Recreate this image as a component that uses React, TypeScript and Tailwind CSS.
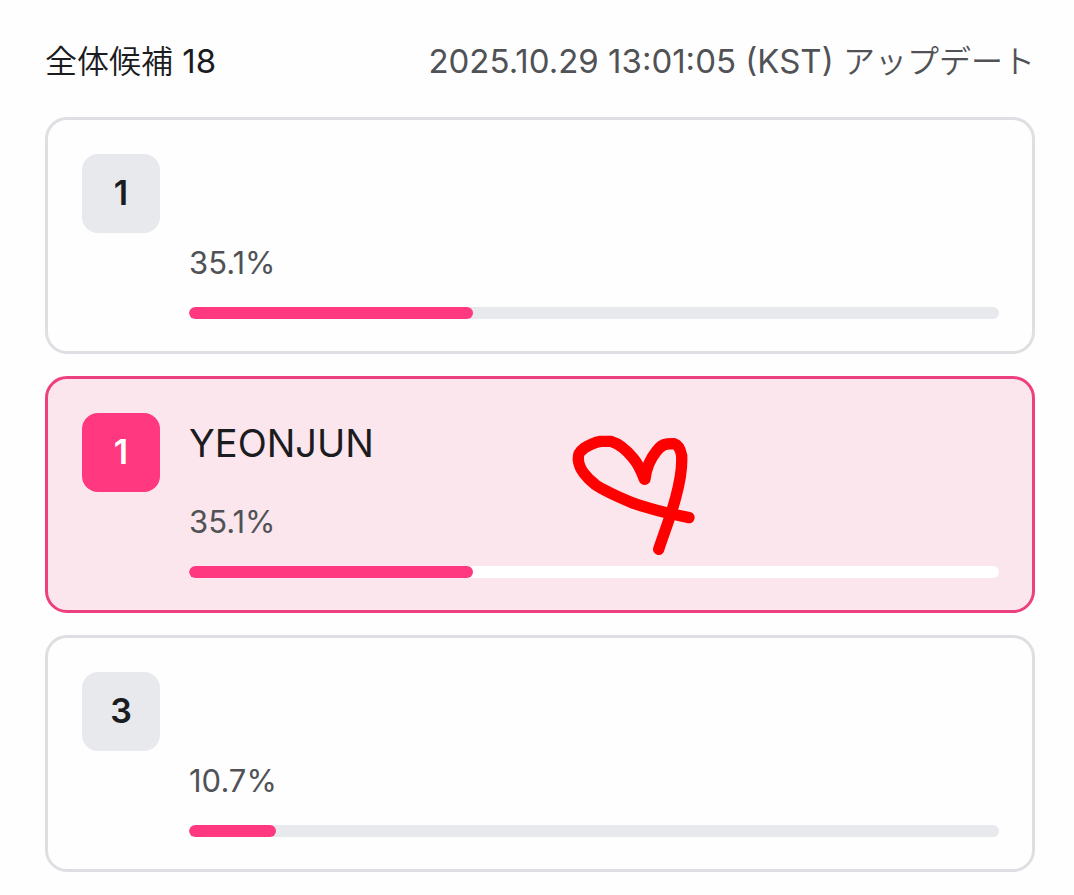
type Candidate = {
    rank: number
    name: string
    percent: number
    selected?: boolean
}

const candidates: Candidate[] = [
    { rank: 1, name: "", percent: 35.1 },
    { rank: 1, name: "YEONJUN", percent: 35.1, selected: true },
    { rank: 3, name: "", percent: 10.7 },
]

function Heart() {
    return (
        <svg
            className="absolute left-[524px] top-[56px] w-[123px] h-[121px]"
            viewBox="65 75 369 363"
            fill="none"
            stroke="#ff0000"
            strokeWidth="34"
            strokeLinecap="round"
            strokeLinejoin="round"
            aria-hidden="true"
        >
            <path d="M282 207C275 188 264 163 249 145C231 123 207 101 182 94L150 94C132 97 115 106 101 115C86 126 83 133 84 150C86 178 112 207 135 224C164 244 202 260 240 276C282 293 340 307 416 323" />
            <path d="M284 207C287 180 299 147 318 124C330 109 337 103 350 102L371 101C385 105 391 121 394 137C396 173 388 219 376 263C364 310 346 356 325 418" />
        </svg>
    )
}

function CandidateCard({ rank, name, percent, selected }: Candidate) {
    return (
        <li className={`relative flex items-start gap-[29px] rounded-[22px] border-[3px] pt-[34px] pb-8 pl-[34px] pr-[33px] ${selected ? "border-[#ec407f] bg-[#fce6ee]" : "border-[#dedfe3] bg-[#fefefe]"}`}>
            <div className={`flex h-[79px] w-[78px] shrink-0 items-center justify-center rounded-2xl pb-0.5 text-[34px] font-semibold leading-10 ${selected ? "bg-[#ff3880] text-white" : "bg-[#e8e9ed] text-[#1b1c1f]"}`}>
                {rank}
            </div>
            <div className="min-w-0 flex-1">
                <p className="h-[60px] text-[38px] leading-[60px] text-[#1b1c1f]">{name}</p>
                <p className="mt-[29px] text-[31px] leading-10 text-[#505256]">{percent}%</p>
                <div
                    className={`mt-6 h-3 overflow-hidden rounded-full ${selected ? "bg-white" : "bg-[#e8e9ed]"}`}
                    role="progressbar"
                    aria-label={`${name} ${percent}%`}
                    aria-valuenow={percent}
                >
                    <div className="h-full rounded-full bg-[#ff3880]" style={{ width: `${percent}%` }} />
                </div>
            </div>
            {selected && <Heart />}
        </li>
    )
}

function App() {
    return (
        <main className="min-h-screen bg-[#fefefe] pt-[37px] pb-4 pl-[45px] pr-[39px] font-['Inter','Noto_Sans_CJK_JP',sans-serif]">
            <header className="mb-[31px] flex items-center justify-between text-[33px] leading-[48px]">
                <h1 className="text-[#1b1c1f]"><span className="text-[32px] font-[350]">全体候補</span> 18</h1>
                <p className="text-[#505256]">2025.10.29 13:01:05 (KST) <span className="text-[32px] font-[350]">アップデート</span></p>
            </header>
            <ul className="flex flex-col gap-[22px]">
                {candidates.map((candidate, index) => (
                    <CandidateCard key={index} {...candidate} />
                ))}
            </ul>
        </main>
    )
}

export default App
